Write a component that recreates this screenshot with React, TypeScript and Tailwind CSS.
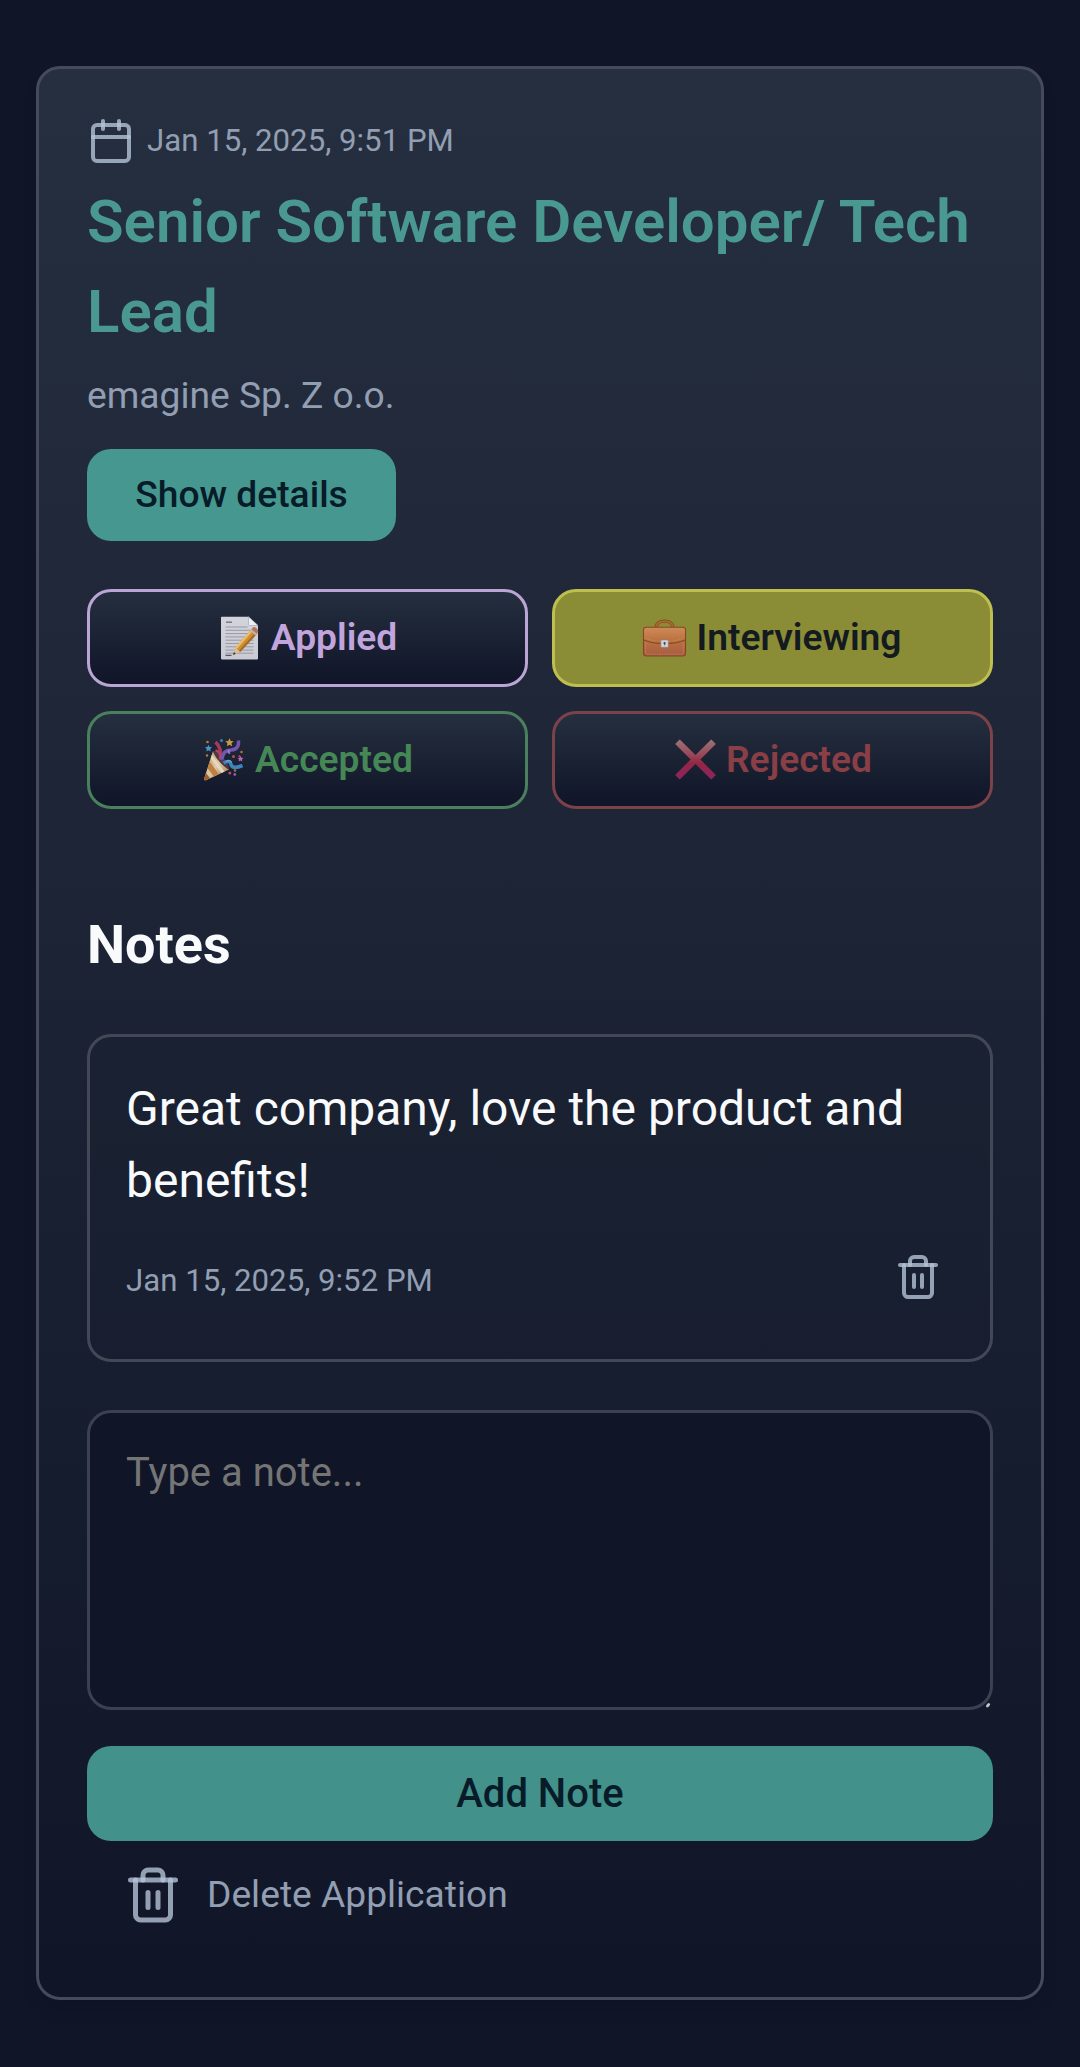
import type { ReactNode } from "react";

function LineIcon({ className, children }: { className: string; children: ReactNode }) {
  return (
    <svg
      viewBox="0 0 24 24"
      fill="none"
      strokeWidth={2}
      strokeLinecap="round"
      strokeLinejoin="round"
      className={`shrink-0 stroke-[#b4c3d7]/80 ${className}`}
    >
      {children}
    </svg>
  );
}

function CalendarIcon() {
  return (
    <LineIcon className="size-12">
      <path d="M8 2v4" />
      <path d="M16 2v4" />
      <rect x="3" y="4" width="18" height="18" rx="2" />
      <path d="M3 10h18" />
    </LineIcon>
  );
}

function TrashIcon({ className }: { className: string }) {
  return (
    <LineIcon className={className}>
      <path d="M3 6h18" />
      <path d="M19 6v14c0 1-1 2-2 2H7c-1 0-2-1-2-2V6" />
      <path d="M8 6V4c0-1 1-2 2-2h4c1 0 2 1 2 2v2" />
      <path d="M10 11v6" />
      <path d="M14 11v6" />
    </LineIcon>
  );
}

function MemoEmoji() {
  const lines = [11, 14.3, 17.6, 20.9, 24.2, 27.5, 30.8, 34.1, 37.2];
  return (
    <svg viewBox="0 0 45 45" className="size-[45px] shrink-0">
      <defs>
        <linearGradient id="paper" x1="0" y1="0" x2="0" y2="1">
          <stop offset="0" stopColor="#d3d4db" />
          <stop offset="1" stopColor="#c9cad4" />
        </linearGradient>
        <linearGradient id="pencil" x1="0" y1="0" x2="1" y2="1">
          <stop offset="0" stopColor="#e0a54a" />
          <stop offset="1" stopColor="#b97a22" />
        </linearGradient>
      </defs>
      <path d="M4.8 .7H31.5L41 9.5V42.6q0 .8-.8 .8H4.8q-.8 0-.8-.8V1.5q0-.8 .8-.8Z" fill="url(#paper)" />
      <path d="M31.5 .7V8.6q0 .9 .9 .9H41Z" fill="#eeeff4" stroke="#a3a6b2" strokeWidth=".7" />
      <path d="M9 6.2h6" stroke="#777a85" strokeWidth="1.5" />
      {lines.map((y) => (
        <path key={y} d={`M8.5 ${y}h${y > 11 ? 28 : 22}`} stroke="#9699a4" strokeWidth="1" />
      ))}
      <path d="M8.5 39.4h6" stroke="#555862" strokeWidth="1.3" />
      <path d="M16 39 18.3 31.5 34.5 13.2 40 17.8 23.2 36Z" fill="url(#pencil)" />
      <path d="M18.3 31.5 34.5 13.2l1.6 1.3L19.8 33Z" fill="#efbf68" />
      <path d="M21.8 34.7 38.4 16.4l1.6 1.4L23.2 36Z" fill="#a56c22" />
      <path d="M16 39 18.3 31.5 23.2 36Z" fill="#dcbf9a" />
      <path d="m16 39 .9-2.9 1.9 1.7Z" fill="#343037" />
      <path d="m33.2 14.7 1.3-1.5 5.5 4.6-1.4 1.6Z" fill="#b8b6bc" />
      <path d="m34.5 13.2 1.7-1.9c1.3-1.4 5.7 2 4.9 4.8L40 17.8Z" fill="#b77459" />
    </svg>
  );
}

function BriefcaseEmoji() {
  return (
    <svg viewBox="0 0 45 45" className="size-[45px] shrink-0">
      <defs>
        <linearGradient id="leather" x1="0" y1="0" x2="0" y2="1">
          <stop offset="0" stopColor="#c8834f" />
          <stop offset=".6" stopColor="#b56c3f" />
          <stop offset="1" stopColor="#a65c42" />
        </linearGradient>
        <linearGradient id="flap" x1="0" y1="0" x2="0" y2="1">
          <stop offset="0" stopColor="#cd8a55" />
          <stop offset="1" stopColor="#b66c3d" />
        </linearGradient>
      </defs>
      <g transform="translate(0 .4) scale(1 .955)">
        <path d="M14.2 11C14.5 2.8 30.5 2.8 30.8 11" fill="none" stroke="#7d4a1b" strokeWidth="3.4" />
        <path d="M14.2 11C14.5 3.1 30.5 3.1 30.8 11" fill="none" stroke="#ac6a2f" strokeWidth="2" />
        <rect x="1.5" y="11.5" width="42" height="30" rx="2.6" fill="url(#leather)" stroke="#884526" strokeWidth="1.1" />
        <path d="M2 24.5v-10q0-2.5 2.5-2.5h36q2.5 0 2.5 2.5v10C33 29.6 12 29.6 2 24.5Z" fill="url(#flap)" />
        <path d="M2 24.7C12 29.8 33 29.8 43 24.7" fill="none" stroke="#894724" strokeWidth="1.1" />
        <path d="M3.5 23C13 27.3 32 27.3 41.5 23" fill="none" stroke="#cf9868" strokeWidth=".6" strokeDasharray="1.4 1" />
        <path d="M3.7 28V37.6q0 2 2 2H39.3q2 0 2-2V28" fill="none" stroke="#c98f68" strokeWidth=".7" strokeDasharray="1.4 1" />
        <rect x="18.9" y="24.7" width="7.4" height="7.6" rx=".8" fill="#d2d3d8" stroke="#8b8286" strokeWidth=".6" />
        <circle cx="22.6" cy="28" r="1.1" fill="#42465a" />
        <path d="M22.6 28v2.3" stroke="#42465a" strokeWidth=".9" />
      </g>
    </svg>
  );
}

function PartyEmoji() {
  const star =
    "M0-4 1.2-1.4 4-1.1 1.9 .8 2.5 3.6 0 2.2-2.5 3.6-1.9 .8-4-1.1-1.2-1.4Z";
  return (
    <svg viewBox="0 0 45 45" className="mb-0.5 size-[45px] shrink-0">
      <defs>
        <linearGradient id="cone" x1="0" y1="0" x2="1" y2="1">
          <stop offset="0" stopColor="#c9974a" />
          <stop offset=".5" stopColor="#dccaa8" />
          <stop offset="1" stopColor="#a96d35" />
        </linearGradient>
      </defs>
      <path d="M12 14 3.2 41.6c-.4 1.4 .6 2.1 1.8 1.6L28 32.6C23.5 29.5 14.5 20.5 12 14Z" fill="url(#cone)" />
      <path d="m8.8 24.5 9 12.7-5 2.3-6.2-8.2Z" fill="#bd8040" />
      <path d="m10.9 18 12.6 16.6-3 1.4L9.7 21.5Z" fill="#e4d8c2" />
      <path d="M3.2 41.6 5 36l4 5.2-4 2C3.8 43.7 2.8 43 3.2 41.6Z" fill="#a05f2d" />
      <path d="M12 14c5-.5 17 12 16 18.6C23 30.5 13.5 20.5 12 14Z" fill="#4b3848" />
      <path d="M19.5 22.5C20.5 14.5 19.5 9.5 14.5 5" fill="none" stroke="#a63a58" strokeWidth="3.6" />
      <path d="M14.5 13.5c3 .5 5.5 3.5 5 9" fill="none" stroke="#b44062" strokeWidth="2.6" />
      <path d="M21 22.5c.5-7 4.5-9.5 9-9.5 6.5-.5 8-4.5 7.5-9.5" fill="none" stroke="#7456b0" strokeWidth="3.5" />
      <path d="M28.5 12.5c-2 2.5-.5 4 .5 3" fill="none" stroke="#9b7ac6" strokeWidth="2" />
      <path d="M22.5 26c4.5-2.5 6.5-2 7.5 1.5s5 3.8 11.5 1" fill="none" stroke="#3f83b9" strokeWidth="3.6" />
      <path d="M25 24.5c2.5-1.5 4.5-1 5.5 1" fill="none" stroke="#67a9d4" strokeWidth="1.4" />
      <path d={star} transform="translate(28.5 5.5) scale(1.05)" fill="#c99b3f" />
      <path d={star} transform="translate(7.5 11.3) scale(.9)" fill="#4a94c7" />
      <path d={star} transform="translate(39.5 21.8) scale(.75)" fill="#b965b4" />
      <circle cx="20.5" cy="3.5" r="1.6" fill="#3c7eb8" />
      <circle cx="6.5" cy="5" r="1.3" fill="#b07d3c" />
      <circle cx="6" cy="18.5" r="1.2" fill="#b07d3c" />
      <circle cx="40.5" cy="15" r="1.3" fill="#a9703d" />
      <circle cx="32.5" cy="19.5" r="1.5" fill="#c04a63" />
      <circle cx="38.3" cy="19.3" r="1" fill="#b94a60" />
      <circle cx="34" cy="33.5" r="1.3" fill="#b5663f" />
      <circle cx="28.8" cy="36" r="1.5" fill="#bd4763" />
      <circle cx="33.8" cy="37.5" r="1.4" fill="#8d5cb0" />
    </svg>
  );
}

function CrossEmoji() {
  return (
    <svg viewBox="0 0 45 45" className="mb-0.5 size-[45px] shrink-0">
      <defs>
        <linearGradient id="cross" x1="0" y1="0" x2="0" y2="1">
          <stop offset="0" stopColor="#9d7377" />
          <stop offset=".35" stopColor="#974c5a" />
          <stop offset=".6" stopColor="#932645" />
          <stop offset="1" stopColor="#8b2461" />
        </linearGradient>
      </defs>
      <path
        d="M8.3 2.9 23.5 18 38.7 2.9q.6-.6 1.2 0l3.5 3.5q.6 .6 0 1.2L28.4 22.5 43.4 37.4q.6 .6 0 1.2l-3.5 3.5q-.6 .6-1.2 0L23.5 27 8.3 42.1q-.6 .6-1.2 0L3.6 38.6q-.6-.6 0-1.2L18.6 22.5 3.6 7.6q-.6-.6 0-1.2l3.5-3.5q.6-.6 1.2 0Z"
        fill="url(#cross)"
      />
    </svg>
  );
}

function StatusButton({ icon, label, className }: { icon: ReactNode; label: string; className: string }) {
  return (
    <button
      className={`flex h-[98px] items-center justify-center gap-[9px] rounded-3xl border-3 pr-px text-[37.2px] font-semibold ${className}`}
    >
      {icon}
      <span>{label}</span>
    </button>
  );
}

export default function App() {
  return (
    <div className="min-h-[2067px] bg-[#101628] px-9 pt-[66px] font-['Roboto',sans-serif] text-[#f8fafc]">
      <main className="flex h-[1934px] flex-col rounded-3xl border-3 border-[#454b5b] bg-linear-to-b from-[#262f3f] to-[#101628] px-12 pt-12 shadow-[0_12px_18px_-3px_rgba(0,0,0,0.12)]">
        <div className="flex h-12 items-center gap-3 text-[31.2px] text-[#929eb2]">
          <CalendarIcon />
          <span>Jan 15, 2025, 9:51 PM</span>
        </div>
        <h1 className="mt-3 text-[60px] leading-[90px] font-semibold text-[#4a9991]">
          Senior Software Developer/ Tech Lead
        </h1>
        <p className="mt-2.5 text-[37.2px] leading-[56px] text-[#929eb2]">emagine Sp. Z o.o.</p>
        <button className="mt-[26px] h-[92px] w-[309px] shrink-0 rounded-3xl bg-[#46978f] text-[37.2px] font-medium text-[#071b29]">
          Show details
        </button>

        <div className="mt-12 grid grid-cols-2 gap-6">
          <StatusButton
            icon={<MemoEmoji />}
            label="Applied"
            className="border-[#bba5d3] bg-linear-to-b from-[#252f3f] to-[#101528] text-[#c1a5dc]"
          />
          <StatusButton
            icon={<BriefcaseEmoji />}
            label="Interviewing"
            className="border-[#bebf4f] bg-[#8b8c36] text-[#131b20]"
          />
          <StatusButton
            icon={<PartyEmoji />}
            label="Accepted"
            className="border-[#4a805e] bg-linear-to-b from-[#252f3f] to-[#101528] text-[#458856]"
          />
          <StatusButton
            icon={<CrossEmoji />}
            label="Rejected"
            className="border-[#7b4249] bg-linear-to-b from-[#252f3f] to-[#101528] text-[#893f45]"
          />
        </div>

        <h2 className="mt-[95px] text-[54px] leading-[82px] font-bold">Notes</h2>

        <article className="mt-12 h-[328px] shrink-0 rounded-3xl border-3 border-[#434857] bg-[#1b2133]/30 p-9">
          <p className="text-[48px] leading-[72px]">Great company, love the product and benefits!</p>
          <div className="mt-9 flex h-12 items-center justify-between pr-3 text-[31.2px] text-[#929eb2]">
            <span className="pt-2">Jan 15, 2025, 9:52 PM</span>
            <button className="flex">
              <TrashIcon className="size-12" />
            </button>
          </div>
        </article>

        <div className="relative mt-12">
          <textarea
            placeholder="Type a note..."
            className="block h-[300px] w-full resize-none rounded-3xl border-3 border-[#3b4151] bg-[#101628] px-9 py-[30px] text-[40px] leading-[60px] placeholder:text-[#757575]"
          />
          <svg viewBox="0 0 9 9" className="pointer-events-none absolute right-0 bottom-0 size-[9px]">
            <path d="m3.4 4.9 1.3-1.3" stroke="#c3c4c8" strokeWidth="2.8" strokeLinecap="round" />
          </svg>
        </div>

        <button className="mt-9 h-[95px] shrink-0 rounded-3xl bg-[#42918a] text-[40px] font-medium text-[#071b29]">
          Add Note
        </button>
        <button className="mt-6 ml-9 flex h-[60px] items-center gap-6 self-start text-[37.2px] text-[#929eb2]">
          <TrashIcon className="size-[60px]" />
          <span>Delete Application</span>
        </button>
      </main>
    </div>
  );
}
